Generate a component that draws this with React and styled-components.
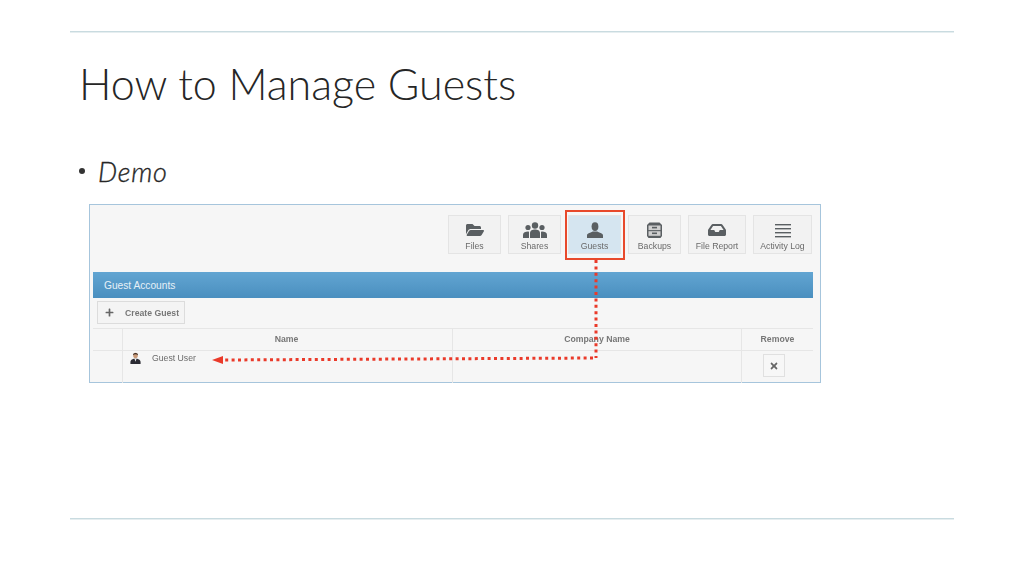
import React from "react"
import styled, { createGlobalStyle } from "styled-components"
import { FaFolderOpen, FaInbox, FaPlus, FaTimes } from "react-icons/fa"

const GlobalStyle = createGlobalStyle`
  html, body {
    margin: 0;
    background: #fff;
  }
`

const Slide = styled.div`
  width: 1024px;
  height: 576px;
  box-sizing: border-box;
  padding: 31px 70px 0;
  font-family: Lato, "Open Sans", sans-serif;
  color: #262626;
  overflow: hidden;
`
const Rule = styled.div`
  height: 1px;
  background: #c9dbe0;
  box-shadow: 0 1px 0 #e6eef0;
`
const Title = styled.h1`
  margin: 26px 0 0 9px;
  font-size: 43px;
  line-height: 52px;
  font-weight: 300;
  height: 52px;
`
const Bullet = styled.div`
  display: flex;
  align-items: center;
  gap: 13px;
  margin: 46px 0 0 9px;
  height: 30px;
  font-size: 27px;
  font-weight: 300;
  font-style: italic;
  letter-spacing: 0.8px;
  -webkit-text-stroke: 0.35px #262626;
  &::before {
    content: "";
    width: 6px;
    height: 6px;
    border-radius: 50%;
    background: #333;
  }
`
const Shot = styled.div`
  position: relative;
  width: 732px;
  height: 179px;
  box-sizing: border-box;
  margin: 18px 0 135px 19px;
  background: #f6f6f6;
  border: 1px solid #a6c5dc;
  font-family: "Liberation Sans", Arial, sans-serif;
  color: #555;
`
const ShotContent = styled.div`
  padding: 10px 7px 0 3px;
  filter: blur(0.4px);
`
const Toolbar = styled.div`
  display: flex;
  justify-content: flex-end;
  gap: 7px;
  height: 39px;
  padding-right: 1px;
`
const ToolButton = styled.div`
  position: relative;
  width: ${(p) => p.$w}px;
  box-sizing: border-box;
  display: flex;
  flex-direction: column;
  align-items: center;
  padding-top: 6px;
  background: ${(p) => (p.$active ? "#d5e5f0" : "#f2f2f2")};
  border: 1px solid #e4e4e4;
  font-size: 8.7px;
  color: #6a6a6a;
  svg {
    display: block;
    height: 16px;
    color: #5a5f62;
  }
  span {
    margin-top: 3px;
    line-height: 11px;
    white-space: nowrap;
  }
  ${(p) =>
    p.$active &&
    `
    &::after {
      content: "";
      position: absolute;
      left: -4px;
      top: -6px;
      width: 60px;
      height: 50px;
      box-sizing: border-box;
      border: 2.5px solid #e8492b;
    }
  `}
`
const LargeGlyph = styled.span`
  && {
    display: block;
    margin: 0;
    line-height: 0;
  }
  svg {
    width: 18px;
    height: 16px;
  }
`
const Header = styled.div`
  display: flex;
  align-items: center;
  height: 26px;
  margin-top: 18px;
  padding-left: 11px;
  background: linear-gradient(#62a5d2, #4a8fbf);
  color: #e6f0f7;
  font-size: 10.2px;
`
const ActionRow = styled.div`
  display: flex;
  padding: 3px 0 4px 4px;
  height: 23px;
`
const CreateButton = styled.div`
  display: flex;
  align-items: center;
  width: 88px;
  box-sizing: border-box;
  padding-left: 7px;
  gap: 11px;
  background: #f4f4f4;
  border: 1px solid #dcdcdc;
  font-size: 8.7px;
  font-weight: 700;
  color: #777;
  svg {
    width: 9px;
    height: 9px;
    color: #666;
  }
`
const Row = styled.div`
  display: grid;
  grid-template-columns: 29px 330px 289px 72px;
  height: ${(p) => p.$h}px;
  border-top: 1px solid #e6e6e6;
`
const Cell = styled.div`
  display: flex;
  justify-content: ${(p) => (p.$left ? "flex-start" : "center")};
  align-items: ${(p) => (p.$top ? "flex-start" : "center")};
  border-left: ${(p) => (p.$first ? "none" : "1px solid #e6e6e6")};
  padding-right: ${(p) => p.$pr || 0}px;
  padding-bottom: ${(p) => (p.$head ? 2 : 0)}px;
  font-size: 8.7px;
  font-weight: ${(p) => (p.$head ? 700 : 400)};
  color: ${(p) => (p.$head ? "#777" : "#6a6a6a")};
`
const UserCell = styled(Cell)`
  gap: 11px;
  height: 13px;
  padding-left: 7px;
  border-left: none;
  svg {
    width: 11px;
    height: 12px;
  }
`
const RemoveButton = styled.div`
  display: flex;
  align-items: center;
  justify-content: center;
  width: 22px;
  height: 23px;
  margin-top: 3px;
  background: #f7f7f7;
  border: 1px solid #e0e0e0;
  box-sizing: border-box;
  svg {
    width: 10px;
    height: 10px;
    color: #666;
  }
`
const RouteOverlay = styled.svg`
  position: absolute;
  left: 0;
  top: 0;
  pointer-events: none;
`

function SharesIcon() {
  return (
    <svg viewBox="0 0 24 16" width="24" fill="currentColor">
      <circle cx="12" cy="3.5" r="3.2" />
      <path d="M7 16 V11 C7 8.5 9.5 7.5 12 7.5 C14.5 7.5 17 8.5 17 11 V16 Z" />
      <circle cx="5" cy="5.5" r="2.6" />
      <path d="M0 16 V12.5 C0 10.5 2.5 9.5 5 9.5 L6 9.7 V16 Z" />
      <circle cx="19" cy="5.5" r="2.6" />
      <path d="M24 16 V12.5 C24 10.5 21.5 9.5 19 9.5 L18 9.7 V16 Z" />
    </svg>
  )
}

function GuestIcon() {
  return (
    <svg viewBox="0 0 16 16" width="16" fill="currentColor">
      <ellipse cx="8" cy="4.6" rx="3.4" ry="4.4" />
      <path d="M0 16 V13.5 C0 11.2 4 10.8 5.6 9.6 H10.4 C12 10.8 16 11.2 16 13.5 V16 Z" />
    </svg>
  )
}

function BackupsIcon() {
  return (
    <svg viewBox="0 0 16 16" width="17">
      <path d="M3 0.5 H13 L15.5 3 V14 L14 16 H2 L0.5 14 V3 Z" fill="currentColor" />
      <rect x="2" y="3.5" width="12" height="4.6" fill="#cfcfcf" />
      <rect x="2" y="9.2" width="12" height="4.6" fill="#cfcfcf" />
      <rect x="5.5" y="4.8" width="5" height="1.6" fill="currentColor" />
      <rect x="5.5" y="10.5" width="5" height="1.6" fill="currentColor" />
    </svg>
  )
}

function LogIcon() {
  return (
    <svg viewBox="0 0 16 16" width="16" fill="currentColor">
      <rect y="2" width="16" height="1.4" />
      <rect y="6" width="16" height="1.4" />
      <rect y="10" width="16" height="1.4" />
      <rect y="14" width="16" height="1.4" />
    </svg>
  )
}

function BusinessmanIcon() {
  return (
    <svg viewBox="0 0 11 13">
      <path d="M0 13 V10.5 C0 8.5 2 8 3.6 7.2 H7.4 C9 8 11 8.5 11 10.5 V13 Z" fill="#2b2b33" />
      <path d="M4.4 7.4 H6.6 L5.5 10.5 Z" fill="#eee" />
      <ellipse cx="5.5" cy="3.8" rx="2.5" ry="3" fill="#c99a78" />
      <path d="M2.8 3.4 C2.6 0.4 8.4 0.4 8.2 3.4 C7 2.2 4 2.2 2.8 3.4 Z" fill="#3a2a22" />
    </svg>
  )
}

const tools = [
  { label: "Files", w: 53, icon: <LargeGlyph><FaFolderOpen /></LargeGlyph> },
  { label: "Shares", w: 53, icon: <SharesIcon /> },
  { label: "Guests", w: 53, icon: <GuestIcon />, active: true },
  { label: "Backups", w: 53, icon: <BackupsIcon /> },
  { label: "File Report", w: 58, icon: <LargeGlyph><FaInbox /></LargeGlyph> },
  { label: "Activity Log", w: 59, icon: <LogIcon /> },
]

export default function App() {
  return (
    <Slide>
      <GlobalStyle />
      <Rule />
      <Title>How to Manage Guests</Title>
      <Bullet>Demo</Bullet>
      <Shot>
        <ShotContent>
          <Toolbar>
            {tools.map((t) => (
              <ToolButton key={t.label} $w={t.w} $active={t.active}>
                {t.icon}
                <span>{t.label}</span>
              </ToolButton>
            ))}
          </Toolbar>
          <Header>Guest Accounts</Header>
          <ActionRow>
            <CreateButton>
              <FaPlus />
              Create Guest
            </CreateButton>
          </ActionRow>
          <Row $h={21}>
            <Cell $first />
            <Cell $head $pr={2}>Name</Cell>
            <Cell $head>Company Name</Cell>
            <Cell $head>Remove</Cell>
          </Row>
          <Row $h={32}>
            <Cell $first />
            <Cell $left $top>
              <UserCell $first $left>
                <BusinessmanIcon />
                Guest User
              </UserCell>
            </Cell>
            <Cell />
            <Cell $top $pr={8}>
              <RemoveButton>
                <FaTimes />
              </RemoveButton>
            </Cell>
          </Row>
        </ShotContent>
        <RouteOverlay width="732" height="179" viewBox="0 0 732 179">
          <path
            d="M506 55 V153 M503 153 L132 155"
            fill="none"
            stroke="#ea3a2a"
            strokeWidth="3"
            strokeDasharray="3 3.4"
          />
          <path d="M122 155 L133 151 V159 Z" fill="#ea3a2a" />
        </RouteOverlay>
      </Shot>
      <Rule />
    </Slide>
  )
}
